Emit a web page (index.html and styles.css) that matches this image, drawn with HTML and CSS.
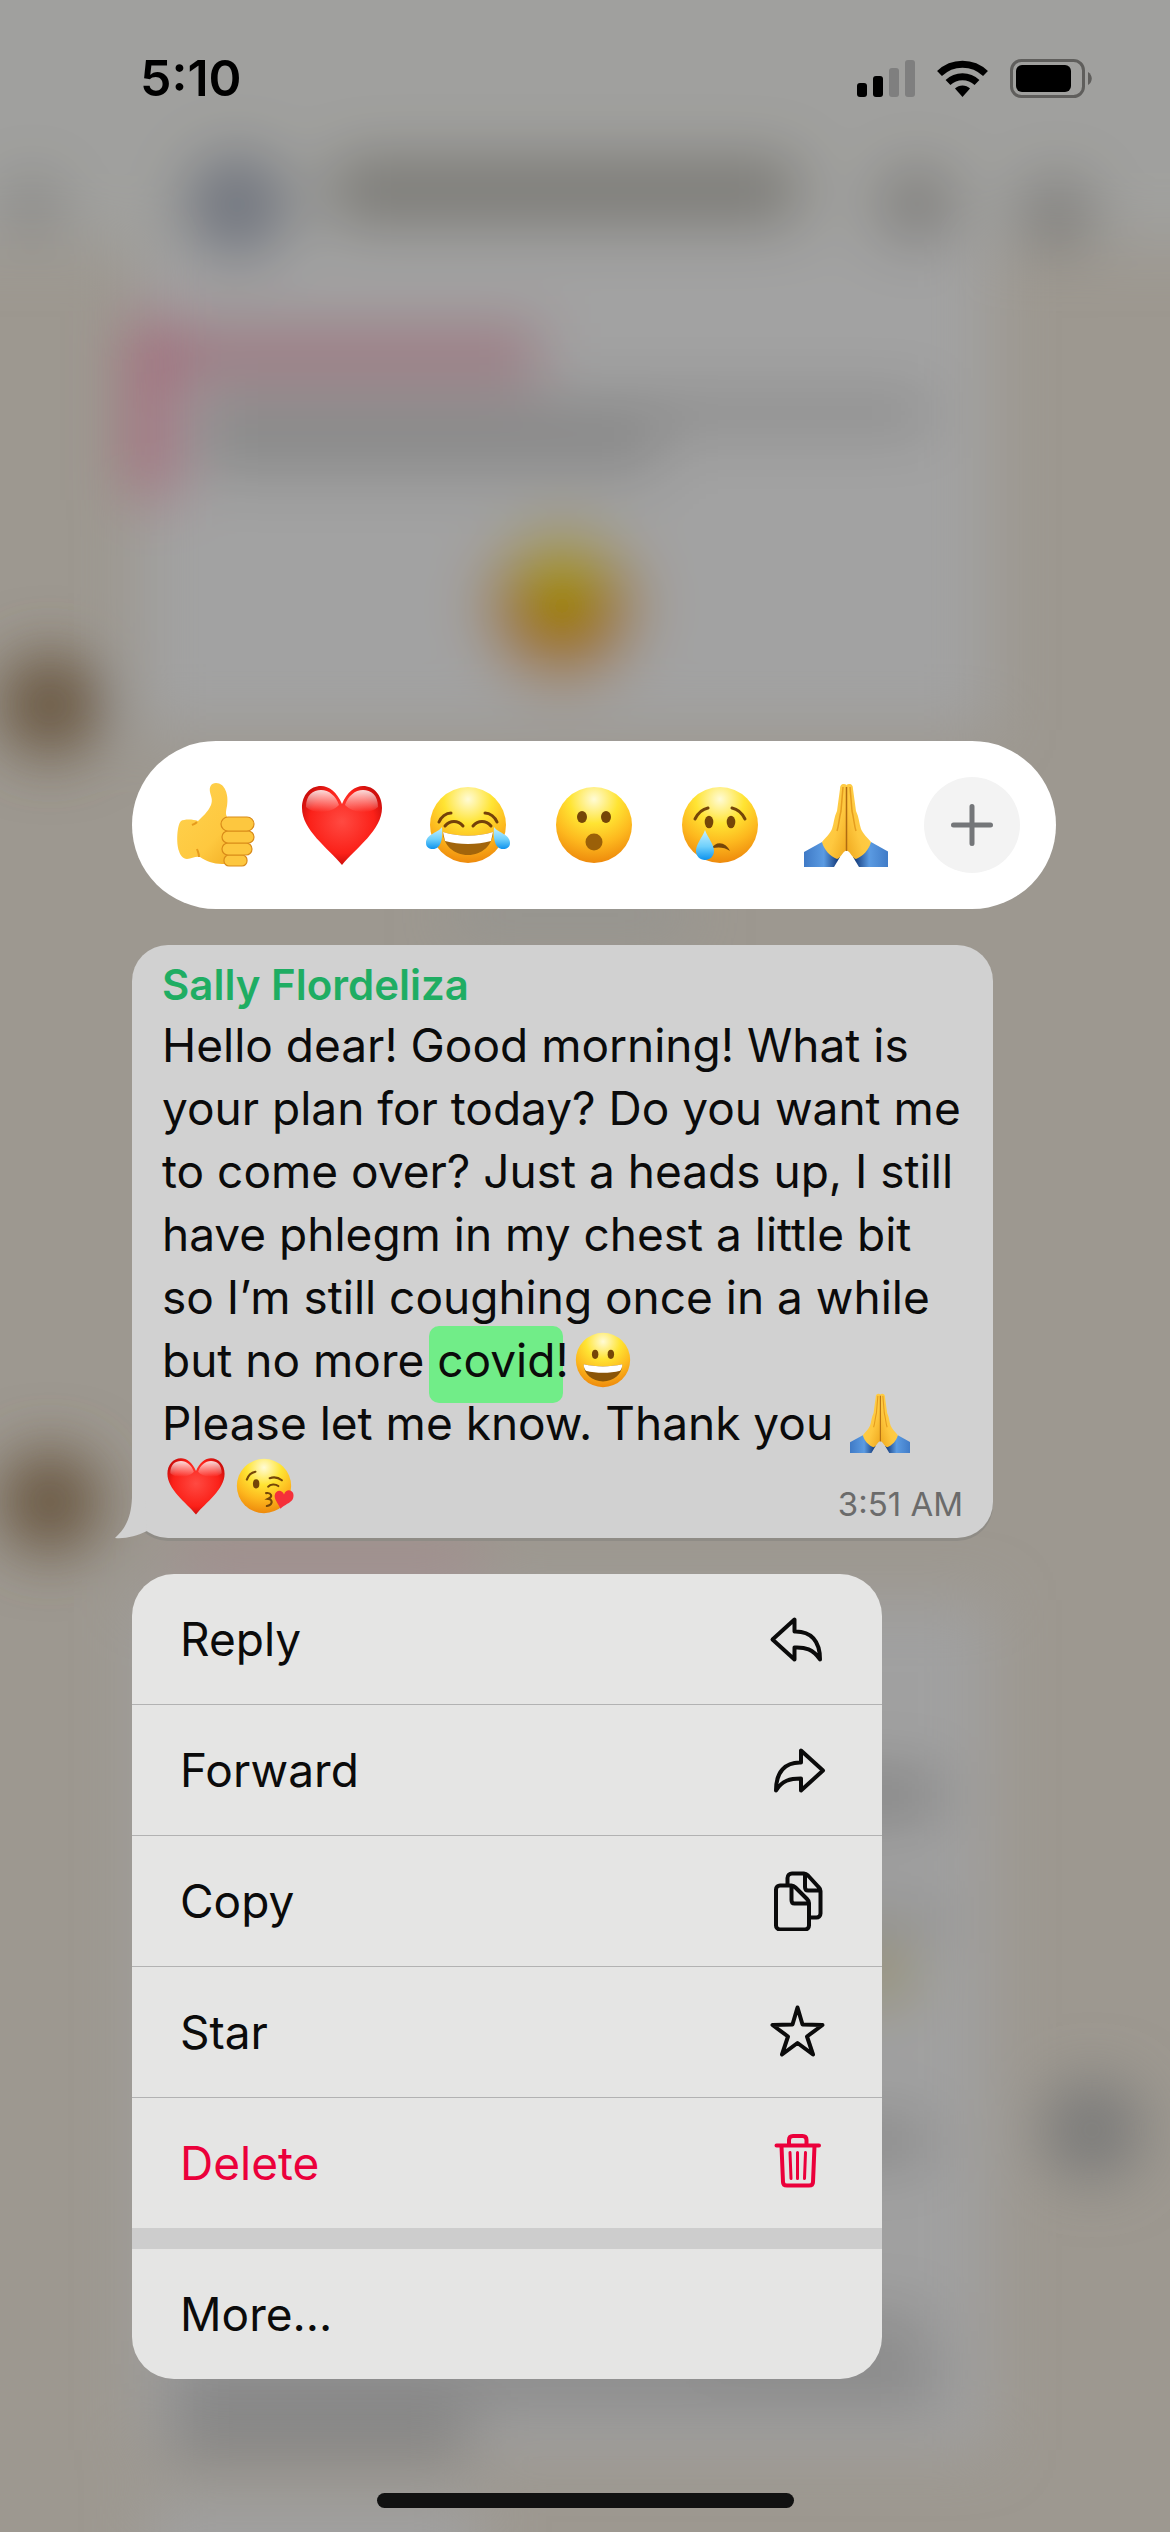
FILE: index.html
```html
<!DOCTYPE html>
<html lang="en">
<head>
<meta charset="utf-8">
<meta name="viewport" content="width=device-width, initial-scale=1">
<title>Message actions</title>
<link rel="stylesheet" href="styles.css">
</head>
<body>
<svg class="defs" aria-hidden="true">
  <defs>
    <radialGradient id="face" cx="50%" cy="16%" r="84%">
      <stop offset="0" stop-color="#fffbd6"/><stop offset=".38" stop-color="#ffe433"/><stop offset=".7" stop-color="#fdb81e"/><stop offset="1" stop-color="#ee8a0c"/>
    </radialGradient>
    <radialGradient id="love" cx="50%" cy="45%" r="62%">
      <stop offset="0" stop-color="#ff4a42"/><stop offset=".65" stop-color="#fb2119"/><stop offset="1" stop-color="#b90606"/>
    </radialGradient>
    <linearGradient id="gloss" x1="0" y1="0" x2="0" y2="1">
      <stop offset="0" stop-color="#fff" stop-opacity=".85"/><stop offset="1" stop-color="#fff" stop-opacity="0"/>
    </linearGradient>
    <linearGradient id="drop" x1="0" y1="0" x2="0" y2="1">
      <stop offset="0" stop-color="#c9f1ff"/><stop offset=".55" stop-color="#6fd0fb"/><stop offset="1" stop-color="#0d93ee"/>
    </linearGradient>
    <linearGradient id="skin" x1="0" y1="0" x2="1" y2="1">
      <stop offset="0" stop-color="#ffd34f"/><stop offset=".6" stop-color="#fec83f"/><stop offset="1" stop-color="#eea51b"/>
    </linearGradient>
    <linearGradient id="sleeve" x1="0" y1="0" x2="1" y2="0">
      <stop offset="0" stop-color="#3f7ac6"/><stop offset=".55" stop-color="#5b9be2"/><stop offset="1" stop-color="#0c2f6e"/>
    </linearGradient>
    <symbol id="e-thumb" viewBox="0 0 84 84">
      <path fill="url(#skin)" d="M42 0c-5 0-7 4-6 9 1 5 3 7 1 13-3 7-9 12-13 16-5-2-14-2-17 0C3 42 2 60 5 68c1 4 4 8 8 8 5 0 8-3 13-2 6 4 13 7 22 7h20l8-46H54c-3-3-2-7-1-12C55 12 51 0 42 0z"/>
      <path fill="none" stroke="#e69a1c" stroke-width="2" d="M23 39c-2 2-3 2-5 3M25 74c0-4-1-5-2-8"/>
      <g fill="#fdc73f" stroke="#d98b19" stroke-width="1.2"><rect x="50" y="72" width="23" height="11" rx="5"/><rect x="48" y="60" width="30" height="12" rx="6"/><rect x="48" y="48" width="32" height="12" rx="6"/><rect x="47" y="34" width="33" height="14" rx="7"/></g>
    </symbol>
    <symbol id="e-heart" viewBox="0 0 84 84">
      <path fill="url(#love)" d="M42 21C37 9 29 3 21 3 10 3 2 12 2 25c0 22 26 40 40 57 14-17 40-35 40-57C82 12 74 3 63 3 55 3 47 9 42 21z"/>
      <path fill="url(#gloss)" d="M6 24C6 12 13 7 21 7c8 0 15 6 18 15C32 30 14 32 6 24zM78 24C78 12 71 7 63 7c-8 0-15 6-18 15 7 8 25 10 33 2z"/>
    </symbol>
    <symbol id="e-joy" viewBox="0 0 84 84">
      <circle cx="42" cy="42" r="38" fill="url(#face)"/>
      <path fill="#a2650b" d="M17 49c16 5 34 5 50 0 0 13-11 23-25 23S17 62 17 49z"/>
      <path fill="#fff" d="M17 49c16 5 34 5 50 0l-2 9c-14 4-32 4-46 0z"/>
      <g fill="none" stroke="#74410a" stroke-width="3" stroke-linecap="round"><path d="M19 43c5-6 13-6 18 0M47 43c5-6 13-6 18 0M13 39c2-5 7-9 12-9M71 39c-2-5-7-9-12-9"/></g>
      <path fill="url(#drop)" d="M16 44c-4 6-16 7-16 16 0 4 3 6 7 6 8 0 10-10 9-22zM68 44c4 6 16 7 16 16 0 4-3 6-7 6-8 0-10-10-9-22z"/>
    </symbol>
    <symbol id="e-wow" viewBox="0 0 84 84">
      <circle cx="42" cy="42" r="38" fill="url(#face)"/>
      <g fill="#754608"><ellipse cx="30" cy="34" rx="5" ry="6"/><ellipse cx="54" cy="34" rx="5" ry="6"/></g>
      <circle cx="42" cy="59" r="8.5" fill="#9b6008"/>
    </symbol>
    <symbol id="e-cry" viewBox="0 0 84 84">
      <circle cx="42" cy="42" r="38" fill="url(#face)"/>
      <g fill="#754608"><ellipse cx="31" cy="39" rx="4.3" ry="6.3"/><ellipse cx="53" cy="39" rx="4.3" ry="6.3"/></g>
      <g fill="none" stroke="#754608" stroke-width="3" stroke-linecap="round"><path d="M17 36c3-6 8-10 13-11M67 36c-3-6-8-10-13-11"/></g>
      <path fill="#754608" d="M33 66c5-9 15-7 19 2-5-4-12-4-17-3z"/>
      <path fill="url(#drop)" d="M27 47c3 8 9 14 9 21 0 5-4 9-9 9s-9-4-9-9c0-7 6-13 9-21z"/>
    </symbol>
    <symbol id="e-pray" viewBox="0 0 84 84">
      <g id="pray-half">
        <path fill="url(#sleeve)" d="M0 69l18-10 18 15-6 10H0z"/>
        <path fill="url(#skin)" d="M40 1c-3 0-4 2-4 5l-3 22c-3 6-3 12-5 18-2 5-7 9-10 13 2 8 8 14 15 17 4-1 5-7 10-9V4c0-2-1-3-3-3z"/>
        <path fill="none" stroke="#e59d1f" stroke-width="1.5" d="M39 4l-2 24c-2 8-2 14-4 20"/>
      </g>
      <use href="#pray-half" transform="matrix(-1 0 0 1 85 0)"/>
      <path stroke="#b06b12" stroke-width="1.5" d="M42.500 4v64"/>
    </symbol>
    <symbol id="e-grin" viewBox="0 0 84 84">
      <circle cx="42" cy="42" r="38" fill="url(#face)"/>
      <g fill="#754608"><ellipse cx="31" cy="34" rx="4.500" ry="6.500"/><ellipse cx="53" cy="34" rx="4.500" ry="6.500"/></g>
      <path fill="#8a5508" d="M15 48c18 4 36 4 54 0 0 14-12 24-27 24S15 62 15 48z"/>
      <path fill="#fff" d="M15 48c18 4 36 4 54 0 0 4-1 6-3 9-15 4-33 4-48 0-2-3-3-5-3-9z"/>
    </symbol>
    <symbol id="e-kiss" viewBox="0 0 84 84">
      <circle cx="42" cy="42" r="38" fill="url(#face)"/>
      <ellipse cx="31" cy="39" rx="4.500" ry="6.500" fill="#754608"/>
      <g fill="none" stroke="#754608" stroke-width="3" stroke-linecap="round"><path d="M18 33c2-6 7-10 12-11M50 31c6-2 12-1 17 3M48 43c3-4 10-4 14-1M45 52c7-1 10 5 3 8 7 1 6 9-2 10"/></g>
      <path fill="#f5303a" d="M70 54c2-6 7-7 10-5 4 2 4 8 2 12-3 5-11 7-17 13-3-8-9-13-8-19 1-7 10-9 13-1z"/>
    </symbol>
  </defs>
</svg>

<div class="screen">
  <svg class="backdrop" viewBox="0 0 1170 2532" preserveAspectRatio="none" aria-hidden="true">
    <defs>
      <filter id="wide" filterUnits="userSpaceOnUse" x="-200" y="-200" width="1570" height="2932"><feGaussianBlur stdDeviation="30"/></filter>
    </defs>
    <rect width="1170" height="2532" fill="#9d9890"/>
    <g filter="url(#wide)">
      <rect x="-150" y="-150" width="1470" height="395" fill="#a0a09e"/>
      <rect x="140" y="240" width="850" height="490" fill="#a2a2a2"/>
      <rect x="140" y="1600" width="850" height="850" fill="#a0a0a0"/>
      <rect x="150" y="2500" width="330" height="120" fill="#a0a0a0"/>
      <circle cx="237" cy="205" r="54" fill="#717680"/>
      <rect x="330" y="155" width="470" height="72" rx="20" fill="#7b7a76"/>
      <circle cx="917" cy="205" r="40" fill="#7f7e7c"/>
      <circle cx="1057" cy="212" r="38" fill="#7f7e7c"/>
      <circle cx="32" cy="205" r="30" fill="#858482"/>
      <rect x="132" y="315" width="42" height="185" fill="#a6667b"/>
      <rect x="170" y="325" width="370" height="55" fill="#9d7882"/>
      <rect x="200" y="395" width="730" height="36" fill="#898989"/>
      <rect x="200" y="425" width="460" height="50" fill="#898989"/>
      <circle cx="562" cy="605" r="74" fill="#9e7210"/>
      <ellipse cx="562" cy="568" rx="54" ry="34" fill="#a39618"/>
      <circle cx="50" cy="705" r="52" fill="#6b5843"/>
      <circle cx="50" cy="1502" r="52" fill="#6b5843"/>
      <rect x="180" y="1550" width="300" height="30" fill="#a5858b"/>
      <rect x="450" y="900" width="240" height="30" fill="#90928f"/>
      <rect x="700" y="1770" width="240" height="50" fill="#828282"/>
      <rect x="700" y="1900" width="250" height="36" fill="#929292"/>
      <circle cx="880" cy="1975" r="34" fill="#96916f"/>
      <rect x="700" y="2118" width="230" height="46" fill="#888888"/>
      <circle cx="1092" cy="2130" r="50" fill="#7a7a79"/>
      <rect x="700" y="2310" width="230" height="34" fill="#888888"/>
      <rect x="170" y="2360" width="770" height="42" fill="#828282"/>
      <rect x="170" y="2412" width="300" height="46" fill="#828282"/>
    </g>
  </svg>

  <header class="status">
    <time class="status-time">5:10</time>
    <div class="status-icons">
      <svg class="signal" viewBox="0 0 58 38" role="img" aria-label="Signal"><rect y="24" width="10" height="14" rx="3"/><rect x="16" y="17" width="10" height="21" rx="3"/><g fill="#7f7f7f"><rect x="32" y="9" width="10" height="29" rx="3"/><rect x="48" y="1" width="10" height="37" rx="3"/></g></svg>
      <svg class="wifi" viewBox="0 0 51 38" role="img" aria-label="Wi-Fi"><g fill="none" stroke="#000" stroke-width="7"><path d="M2.500 14.500a33 33 0 0 1 46 0"/><path d="M11 23.500a21 21 0 0 1 29 0"/></g><path d="M18 29.500c4-4 11-4 15 0L25.500 38z"/></svg>
      <svg class="battery" viewBox="0 0 82 39" role="img" aria-label="Battery"><rect x="1.500" y="1.500" width="72" height="36" rx="10" fill="none" stroke="#5f5e5c" stroke-width="3"/><rect x="6" y="6" width="55" height="27" rx="6"/><path fill="#5f5e5c" d="M78 13c5 3 5 10 0 13z"/></svg>
    </div>
  </header>

  <main class="stack">
    <div class="reactions" role="toolbar" aria-label="Reactions">
      <button class="react" aria-label="Thumbs up"><svg class="emoji"><use href="#e-thumb"/></svg></button>
      <button class="react" aria-label="Heart"><svg class="emoji"><use href="#e-heart"/></svg></button>
      <button class="react" aria-label="Tears of joy"><svg class="emoji"><use href="#e-joy"/></svg></button>
      <button class="react" aria-label="Surprised"><svg class="emoji"><use href="#e-wow"/></svg></button>
      <button class="react" aria-label="Crying"><svg class="emoji"><use href="#e-cry"/></svg></button>
      <button class="react" aria-label="Folded hands"><svg class="emoji"><use href="#e-pray"/></svg></button>
      <button class="react react-more" aria-label="More reactions"><svg class="plus" viewBox="0 0 42 42"><path d="M21 2.500v37M2.500 21h37"/></svg></button>
    </div>

    <article class="bubble">
      <svg class="tail" viewBox="0 0 40 50" aria-hidden="true"><path d="M17 0v4C16 22 12 33 0 44c10 1 22-2 32-7L30 0z"/></svg>
      <h1 class="sender">Sally Flordeliza</h1>
      <div class="content">
        <p class="text">Hello dear! Good morning! What is<br>your plan for today? Do you want me<br>to come over? Just a heads up, I still<br>have phlegm in my chest a little bit<br>so I’m still coughing once in a while<br>but no more <mark class="hit">covid</mark>!<svg class="inline-emoji" role="img" aria-label="Grinning face"><use href="#e-grin"/></svg><br>Please let me know. Thank you <svg class="inline-emoji" role="img" aria-label="Folded hands"><use href="#e-pray"/></svg><br><svg class="inline-emoji" role="img" aria-label="Heart"><use href="#e-heart"/></svg><svg class="inline-emoji" role="img" aria-label="Face blowing a kiss"><use href="#e-kiss"/></svg></p>
        <time class="sent">3:51 AM</time>
      </div>
    </article>

    <div class="menu" role="menu">
      <button class="item" role="menuitem">Reply<svg class="icon" viewBox="0 0 60 60"><path d="M26.500 22.500C43 22 52 32 52 50.500 45 40 37 38 26.500 38.500v12L4.500 30.500l22-20z"/></svg></button>
      <button class="item" role="menuitem">Forward<svg class="icon" viewBox="0 0 60 60"><path d="M33 22.500C17 22 8 32 8 50.500c6-10 14-12 25-12v12l22-20-22-20z"/></svg></button>
      <button class="item" role="menuitem">Copy<svg class="icon" viewBox="0 0 60 60"><path d="M12 14.500h11.500c2 0 3 1 4 2L39 28c1 1 2 2 2 4v22.500c0 2.500-2 4-4 4H12c-2.500 0-4-2-4-4V18.500c0-2.500 2-4 4-4zM23.500 15v14c0 2 1 3.500 3 3.500h14M19.500 13V7c0-3 2-4.500 4.500-4.500h12c2 0 3 1 4 2L50.500 16c1 1 2 2 2 4v22.500c0 2.500-2 4-4 4h-6M37 3v13c0 2 1 3.500 3 3.500h12"/></svg></button>
      <button class="item" role="menuitem">Star<svg class="icon" viewBox="0 0 60 60"><path d="M29.500 5.500l5 17 20 .500L39 34.500l6 18-15.500-11.500L14 52.500l6-18L4.500 23l20-.5z"/></svg></button>
      <button class="item danger" role="menuitem">Delete<svg class="icon" viewBox="0 0 60 60"><path d="M8.500 12.500H51M21 12V7c0-2.500 1-4 4-4h9.500c3 0 4 1.500 4 4v5M13.500 13l1.500 36c0 2.500 1.500 3.500 4 3.500h22c2.500 0 4-1 4-3.500l1.500-36"/><path stroke-width="3" d="M22 19.500l1 26M29.500 19.500v26M37.500 19.500l-1 26"/></svg></button>
      <button class="item after-gap" role="menuitem">More...</button>
    </div>
  </main>

  <div class="home-bar"></div>
</div>
</body>
</html>
```
FILE: styles.css
```css
* { box-sizing: border-box; }

body {
  margin: 0;
  font-family: Inter, "Liberation Sans", sans-serif;
  color: #0b0b0b;
}

button {
  border: 0;
  padding: 0;
  background: none;
  font: inherit;
  color: inherit;
  cursor: pointer;
}

svg { display: block; flex: none; }

.defs { position: absolute; width: 0; height: 0; }

.screen {
  position: relative;
  isolation: isolate;
  display: flex;
  flex-direction: column;
  min-height: 100vh;
  overflow: hidden;
}

.backdrop {
  position: absolute;
  inset: 0;
  z-index: -1;
  width: 100%;
  height: 100%;
}

/* Status bar */
.status {
  display: flex;
  justify-content: space-between;
  align-items: center;
  height: 156px;
  padding: 0 78px 0 140px;
  color: #000;
}

.status-time { font-size: 50px; line-height: 60px; font-weight: 600; }
.status-icons { display: flex; align-items: center; gap: 22px; }
.signal { width: 58px; height: 38px; }
.wifi { width: 51px; height: 38px; }
.battery { width: 82px; height: 39px; }

/* Focused message with its reactions and actions */
.stack {
  display: flex;
  flex-direction: column;
  gap: 36px;
  margin-top: 585px;
  padding: 0 114px 0 132px;
}

.reactions {
  display: grid;
  grid-template-columns: repeat(7, 1fr);
  place-items: center;
  height: 168px;
  padding: 0 21px;
  border-radius: 84px;
  background: #fff;
}

.react { display: grid; place-items: center; }
.emoji { width: 84px; height: 84px; }
.react-more { width: 96px; height: 96px; border-radius: 50%; background: #f3f3f3; }
.plus { width: 42px; height: 42px; fill: none; stroke: #747679; stroke-width: 5; stroke-linecap: round; }

.bubble {
  position: relative;
  margin-right: 63px;
  padding: 15px 30px 20px;
  border-radius: 36px;
  background: #d1d1d1;
  box-shadow: 0 3px 0 #8f8c86;
}

.tail {
  position: absolute;
  left: -17px;
  bottom: -6px;
  width: 40px;
  height: 50px;
  fill: #d1d1d1;
}

.sender {
  margin: 0 0 4px;
  font-size: 42px;
  line-height: 50px;
  font-weight: 600;
  color: #1fad63;
}

.content { display: grid; }
.content > * { grid-area: 1 / 1; }

.text { margin: 0; font-size: 46px; line-height: 63px; white-space: nowrap; }

.hit {
  margin: 0 -8px;
  padding: 6px 8px 15px;
  border-radius: 10px;
  background: #71ed88;
  color: inherit;
}

.inline-emoji {
  display: inline-block;
  width: 60px;
  height: 60px;
  margin: 0 4px;
  vertical-align: -13px;
}

.sent {
  place-self: end;
  font-size: 33px;
  line-height: 28px;
  color: #6b6b6b;
}

.menu {
  display: flex;
  flex-direction: column;
  width: 750px;
  max-width: 100%;
  border-radius: 42px;
  overflow: hidden;
  background: #e5e5e4;
}

.item {
  display: flex;
  justify-content: space-between;
  align-items: center;
  height: 130px;
  padding: 0 54px 0 48px;
  font-size: 46px;
  line-height: 60px;
}

.item + .item { height: 131px; border-top: 1px solid #b2b2b2; }
.item.item.after-gap { height: 151px; border-top: 21px solid #cdcdcd; }
.danger { color: #eb003b; }

.icon {
  width: 60px;
  height: 60px;
  fill: none;
  stroke: currentColor;
  stroke-width: 4;
  stroke-linecap: round;
  stroke-linejoin: round;
}

.danger .icon { stroke-width: 4; }

.home-bar {
  width: 417px;
  height: 15px;
  margin: auto auto 24px;
  border-radius: 8px;
  background: #111;
}
```
